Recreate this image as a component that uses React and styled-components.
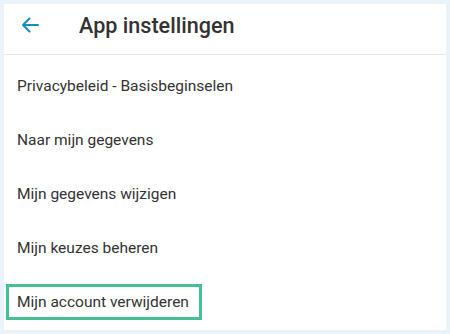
import React from 'react';
import styled, { createGlobalStyle } from 'styled-components';

const GlobalStyle = createGlobalStyle`
  html, body {
    margin: 0;
    padding: 0;
    background: #eaf3fa;
  }
  body {
    font-family: Roboto, 'Noto Sans', sans-serif;
  }
`;

const Page = styled.div`
  padding: 4px;
  height: 334px;
  box-sizing: border-box;
`;

const Panel = styled.div`
  background: #ffffff;
  height: 326px;
  display: flex;
  flex-direction: column;
`;

const Header = styled.header`
  height: 51px;
  padding-bottom: 8px;
  display: flex;
  align-items: center;
  border-bottom: 1px solid #e6e8ec;
  box-sizing: border-box;
`;

const BackButton = styled.button`
  width: 75px;
  height: 100%;
  padding: 0 0 0 17px;
  border: none;
  background: transparent;
  display: flex;
  align-items: center;
  cursor: pointer;
`;

const Title = styled.h1`
  margin: 0;
  font-size: 21.6px;
  font-weight: 500;
  color: #333333;
`;

const List = styled.ul`
  list-style: none;
  margin: 0;
  padding: 4px 0 0 2px;
  display: flex;
  flex-direction: column;
`;

const Item = styled.li`
  height: 54px;
  display: flex;
  align-items: center;
`;

const ItemLabel = styled.span`
  display: flex;
  align-items: center;
  height: 36px;
  padding: 0 10px 0 8px;
  border: 3px solid ${p => (p.$selected ? '#45c093' : 'transparent')};
  box-sizing: border-box;
  font-size: 15.5px;
  font-weight: 400;
  color: #333333;
`;

const ArrowIcon = () => (
  <svg width="18" height="16" viewBox="0 0 18 16" fill="none">
    <path
      d="M17 8H2M8.5 1.5L2 8l6.5 6.5"
      stroke="#1a8bc0"
      strokeWidth="2"
      strokeLinecap="round"
      strokeLinejoin="round"
    />
  </svg>
);

const items = [
  'Privacybeleid - Basisbeginselen',
  'Naar mijn gegevens',
  'Mijn gegevens wijzigen',
  'Mijn keuzes beheren',
  'Mijn account verwijderen',
];

export default function App() {
  return (
    <Page>
      <GlobalStyle />
      <Panel>
        <Header>
          <BackButton aria-label="Terug">
            <ArrowIcon />
          </BackButton>
          <Title>App instellingen</Title>
        </Header>
        <List>
          {items.map((label, idx) => (
            <Item key={label}>
              <ItemLabel $selected={idx === items.length - 1}>{label}</ItemLabel>
            </Item>
          ))}
        </List>
      </Panel>
    </Page>
  );
}
